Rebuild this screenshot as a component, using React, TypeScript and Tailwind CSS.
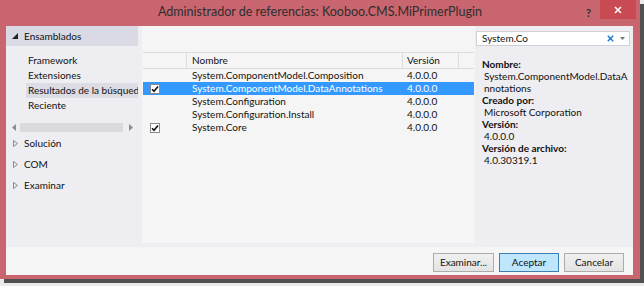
import React from "react";

const assemblies = [
  { name: "System.ComponentModel.Composition", version: "4.0.0.0", checked: false, selected: false },
  { name: "System.ComponentModel.DataAnnotations", version: "4.0.0.0", checked: true, selected: true },
  { name: "System.Configuration", version: "4.0.0.0", checked: false, selected: false },
  { name: "System.Configuration.Install", version: "4.0.0.0", checked: false, selected: false },
  { name: "System.Core", version: "4.0.0.0", checked: true, selected: false },
];

function Check() {
  return (
    <div className="w-[10px] h-[10px] bg-white border border-[#8a8a8a] flex items-center justify-center">
      <svg width="8" height="8" viewBox="0 0 8 8">
        <path d="M1 4.2 L3 6.3 L7 1.4" fill="none" stroke="#111" strokeWidth="1.6" />
      </svg>
    </div>
  );
}

function Collapsed({ label }: { label: string }) {
  return (
    <div className="h-[21px] flex items-center pl-[7px]">
      <svg width="5" height="7" viewBox="0 0 5 7">
        <path d="M0.5 0.5 L4.5 3.5 L0.5 6.5 Z" fill="none" stroke="#8a8a8a" strokeWidth="1" />
      </svg>
      <span className="ml-[6px]">{label}</span>
    </div>
  );
}

function Button({ label, primary }: { label: string; primary?: boolean }) {
  return (
    <div
      className={
        primary
          ? "w-[60px] h-[19px] flex items-center justify-center bg-[#bee6fd] border border-[#3c7fb1]"
          : "w-[60px] h-[19px] flex items-center justify-center bg-gradient-to-b from-[#f0f0f0] to-[#e3e3e3] border border-[#acacac]"
      }
    >
      {label}
    </div>
  );
}

export default function App() {
  return (
    <div className="w-[644px] h-[286px] bg-[#ebebeb] overflow-hidden font-['Lato',sans-serif] text-[10px] text-[#111]">
      <div className="w-[640px] h-[279px] bg-[#c9656f] shadow-[4px_4px_0_#505050] flex flex-col">
        {/* title bar */}
        <div className="h-[26px] grid grid-cols-[1fr_auto_1fr]">
          <div />
          <div className="flex items-center text-[12.5px] text-[#2e2e2e] pb-[1px]">
            Administrador de referencias: Kooboo.CMS.MiPrimerPlugin
          </div>
          <div className="flex justify-end items-start">
            <span className="mt-[5px] mr-[9px] text-[11px] font-bold text-[#2e2e2e]">?</span>
            <div className="w-[36px] h-[19px] mr-[4px] bg-[#c84a52] flex items-center justify-center">
              <svg width="8" height="8" viewBox="0 0 8 8">
                <path d="M1 1 L7 7 M7 1 L1 7" stroke="#fff" strokeWidth="1.5" />
              </svg>
            </div>
          </div>
        </div>

        {/* client */}
        <div className="ml-[6px] mr-[7px] h-[249px] flex flex-col">
          <div className="h-[221px] flex bg-[#ededf2]">
            {/* left */}
            <div className="w-[136px] flex flex-col">
              <div className="h-[20px] mr-[4px] bg-[#d9dae3] flex items-center pl-[6px]">
                <svg width="6" height="6" viewBox="0 0 6 6">
                  <path d="M6 0 L6 6 L0 6 Z" fill="#222" />
                </svg>
                <span className="ml-[6px]">Ensamblados</span>
              </div>
              <div className="mt-[7px] flex flex-col">
                <div className="h-[15px] flex items-center pl-[22px]">Framework</div>
                <div className="h-[15px] flex items-center pl-[22px]">Extensiones</div>
                <div className="h-[15px] ml-[20px] mr-[4px] bg-[#dcdce4] flex items-center pl-[2px] whitespace-nowrap overflow-hidden">
                  Resultados de la búsqueda
                </div>
                <div className="h-[15px] flex items-center pl-[22px]">Reciente</div>
              </div>
              <div className="mt-[9px] h-[10px] flex items-center pl-[6px]">
                <svg width="4" height="7" viewBox="0 0 4 7">
                  <path d="M4 0 L4 7 L0 3.5 Z" fill="#8c8c8c" />
                </svg>
                <div className="ml-[4px] w-[103px] h-[9px] bg-[#dadade]" />
                <svg className="ml-[6px]" width="4" height="7" viewBox="0 0 4 7">
                  <path d="M0 0 L0 7 L4 3.5 Z" fill="#8c8c8c" />
                </svg>
              </div>
              <div className="mt-[1px] flex flex-col">
                <Collapsed label="Solución" />
                <Collapsed label="COM" />
                <Collapsed label="Examinar" />
              </div>
            </div>

            {/* middle */}
            <div className="w-[333px] flex flex-col">
              <div className="h-[217px] bg-[#f5f5f5] pl-[1px] pr-[1px] pt-[26px]">
                <div className="h-[17px] flex border-y border-[#dcdcdc]">
                  <div className="w-[44px] border-r border-[#dcdcdc]" />
                  <div className="w-[216px] border-r border-[#dcdcdc] flex items-center pl-[5px]">Nombre</div>
                  <div className="w-[56px] border-r border-[#dcdcdc] flex items-center pl-[4px]">Versión</div>
                </div>
                {assemblies.map((a) => (
                  <div
                    key={a.name}
                    className={a.selected ? "h-[13px] flex bg-[#3399ff] text-white" : "h-[13px] flex"}
                  >
                    <div className="w-[44px] flex items-center pl-[7px]">{a.checked && <Check />}</div>
                    <div className="w-[216px] flex items-center pl-[5px] whitespace-nowrap">{a.name}</div>
                    <div className="w-[56px] flex items-center pl-[4px]">{a.version}</div>
                  </div>
                ))}
              </div>
            </div>

            {/* right */}
            <div className="w-[158px] flex flex-col pt-[5px]">
              <div className="ml-[1px] w-[154px] h-[15px] bg-white border border-[#d0d0d6] flex items-center pl-[5px] pr-[4px]">
                <span className="flex-1">System.Co</span>
                <svg width="7" height="7" viewBox="0 0 7 7">
                  <path d="M0.8 0.8 L6.2 6.2 M6.2 0.8 L0.8 6.2" stroke="#1c7cd5" strokeWidth="1.5" />
                </svg>
                <svg className="ml-[6px]" width="5" height="3" viewBox="0 0 5 3">
                  <path d="M0 0 L5 0 L2.5 3 Z" fill="#777" />
                </svg>
              </div>
              <div className="mt-[12px] leading-[12px] flex flex-col">
                <div className="pl-[7px] font-bold">Nombre:</div>
                <div className="pl-[9px]">System.ComponentModel.DataA</div>
                <div className="pl-[9px]">nnotations</div>
                <div className="pl-[7px] font-bold">Creado por:</div>
                <div className="pl-[9px]">Microsoft Corporation</div>
                <div className="pl-[7px] font-bold">Versión:</div>
                <div className="pl-[9px]">4.0.0.0</div>
                <div className="pl-[7px] font-bold">Versión de archivo:</div>
                <div className="pl-[9px]">4.0.30319.1</div>
              </div>
            </div>
          </div>

          {/* bottom buttons */}
          <div className="h-[28px] bg-[#f5f5f5] flex justify-end items-start pt-[6px] pr-[9px] gap-[5px]">
            <div className="w-[61px] h-[19px] flex items-center justify-center bg-gradient-to-b from-[#f0f0f0] to-[#e3e3e3] border border-[#acacac]">
              Examinar...
            </div>
            <Button label="Aceptar" primary />
            <Button label="Cancelar" />
          </div>
        </div>
      </div>
    </div>
  );
}
